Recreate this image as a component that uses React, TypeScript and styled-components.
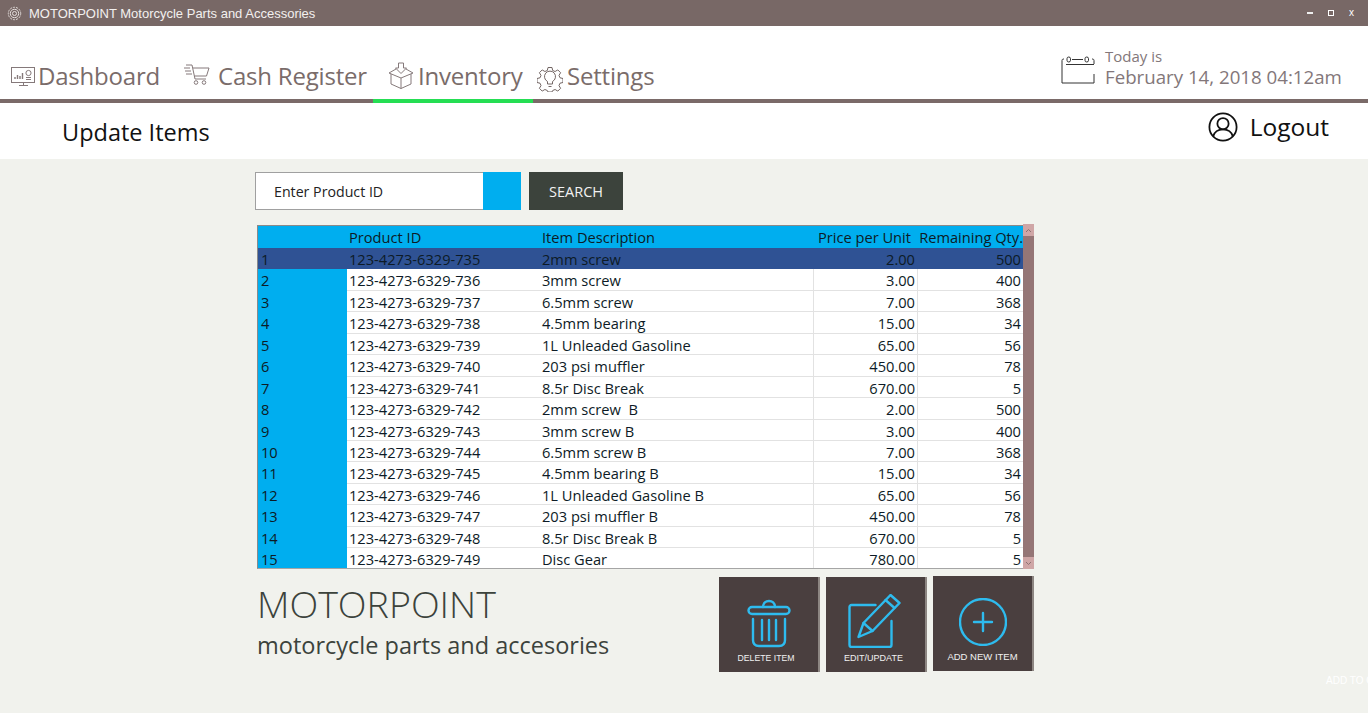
import React from 'react'
import styled, {createGlobalStyle} from 'styled-components'

const GlobalStyle = createGlobalStyle`
  html, body {
    margin: 0;
    padding: 0;
    background: #fff;
    overflow: hidden;
  }
  * {
    box-sizing: border-box;
  }
`

const Page = styled.div`
  position: relative;
  width: 1368px;
  height: 720px;
  overflow: hidden;
  font-family: "Open Sans", "Noto Sans", sans-serif;
  background: #fff;
`

const TitleBar = styled.header`
  display: flex;
  align-items: center;
  height: 26px;
  padding: 0 9px 0 7px;
  background: #786866;
  color: #f3f0ef;
`

const AppTitle = styled.span`
  margin-left: 7px;
  font-family: "Liberation Sans", sans-serif;
  font-size: 13px;
  flex: 1;
`

const WindowButtons = styled.div`
  display: flex;
  align-items: center;
  gap: 15px;
  padding-right: 5px;
`

const Minimize = styled.span`
  width: 6px;
  height: 2px;
  background: #eee;
`

const Maximize = styled.span`
  width: 6px;
  height: 6px;
  border: 1px solid #fff;
`

const CloseMark = styled.span`
  font-family: "Liberation Sans", sans-serif;
  font-size: 10px;
  line-height: 10px;
  color: #fff;
`

const NavBar = styled.nav`
  display: flex;
  align-items: flex-end;
  height: 77px;
  border-bottom: 4px solid #7a6a68;
`

const Tab = styled.div<{$width: number; $pad: number; $gap: number; $active?: boolean}>`
  display: flex;
  align-items: center;
  width: ${(p) => p.$width}px;
  height: 42px;
  margin-bottom: -4px;
  padding: 0 0 9px ${(p) => p.$pad}px;
  gap: ${(p) => p.$gap}px;
  border-bottom: 4px solid ${(p) => (p.$active ? '#25de53' : 'transparent')};
  color: #7a6c6a;
  font-size: 24px;
  letter-spacing: -0.2px;
  white-space: nowrap;
`

const DateBlock = styled.div`
  display: flex;
  align-items: center;
  margin-left: auto;
  gap: 10px;
  width: 307px;
  height: 60px;
  margin-bottom: 1px;
  color: #83777a;
`

const DateText = styled.div`
  display: flex;
  flex-direction: column;
`

const TodayLabel = styled.span`
  font-size: 15px;
  line-height: 16px;
`

const DateValue = styled.span`
  font-size: 18.7px;
  line-height: 25px;
  white-space: nowrap;
`

const SubHeader = styled.div`
  display: flex;
  align-items: center;
  justify-content: space-between;
  height: 56px;
  padding: 0 39px 2px 62px;
  color: #111;
`

const PageTitle = styled.h1`
  margin: 4px 0 0;
  font-size: 23.5px;
  font-weight: 400;
`

const Logout = styled.div`
  display: flex;
  align-items: center;
  gap: 12px;
  margin-top: -7px;
  font-size: 24.5px;
`

const Main = styled.main`
  height: 554px;
  padding: 13px 0 0 255px;
  background: #f1f2ed;
`

const SearchRow = styled.div`
  display: flex;
  height: 38px;
`

const SearchField = styled.div`
  display: flex;
  align-items: center;
  width: 228px;
  padding-left: 18px;
  background: #fff;
  border: 1px solid #a0a0a0;
  border-right: none;
  color: #222;
  font-size: 14.2px;
`

const SearchSwatch = styled.div`
  width: 38px;
  background: #00aeef;
`

const SearchButton = styled.button`
  width: 94px;
  margin-left: 8px;
  border: none;
  background: #3c433c;
  color: #f2f2f2;
  font-family: inherit;
  font-size: 14.5px;
`

const GridWrap = styled.div`
  display: flex;
  width: 777px;
  height: 345px;
  margin: 14px 0 0 2px;
  overflow: hidden;
`

const Grid = styled.div`
  flex: 1;
  margin-top: 1px;
  overflow: hidden;
  border-top: 1px solid #8a8a8a;
  border-bottom: 1px solid #a5a5a5;
  border-left: 1px solid #8a8a8a;
  font-size: 14.65px;
  color: #0d1b26;
`

const Row = styled.div<{$kind: 'head' | 'selected' | 'normal'}>`
  display: grid;
  grid-template-columns: 89px 192px 274px 104px 106px;
  height: ${(p) => (p.$kind === 'head' ? 22 : 21.45)}px;
  line-height: 23px;
  background: ${(p) => (p.$kind === 'head' ? '#00aeef' : p.$kind === 'selected' ? '#2f5294' : '#fff')};
  border-bottom: ${(p) => (p.$kind === 'normal' ? '1.5px solid #e2e2e2' : 'none')};
`

const RowNumber = styled.div`
  padding-left: 3px;
  background: #00aeef;
  margin-bottom: -2px;
  ${Row}[data-selected] & {
    background: transparent;
  }
`

const Cell = styled.div<{$right?: boolean; $inset?: number}>`
  padding: 0 ${(p) => p.$inset ?? 2}px 0 1px;
  text-align: ${(p) => (p.$right ? 'right' : 'left')};
  white-space: pre;
  overflow: hidden;
  border-left: 1px solid transparent;
  ${Row}[data-normal] &:nth-child(n + 4) {
    border-left-color: #e2e2e2;
  }
`

const TextCell = styled(Cell)`
  padding-left: 2px;
`

const ScrollTrack = styled.div`
  width: 11px;
  display: flex;
  flex-direction: column;
  background: #957676;
`

const ScrollCap = styled.div`
  height: 12px;
  background: #cfa6a6;
  display: flex;
  align-items: center;
  justify-content: center;
`

const ScrollThumb = styled.div`
  flex: 1;
`

const Footer = styled.div`
  display: flex;
  width: 779px;
  margin-top: 8px;
`

const Brand = styled.div`
  flex: 1;
  padding: 5px 0 0 2px;
  color: #3c433c;
`

const BrandName = styled.div`
  font-size: 37.6px;
  font-weight: 300;
  line-height: 44px;
`

const BrandTagline = styled.div`
  font-size: 23.5px;
  line-height: 38px;
`

const ActionButton = styled.div<{$raise?: boolean}>`
  display: flex;
  flex-direction: column;
  align-items: center;
  justify-content: flex-end;
  width: 101px;
  height: 95px;
  margin-left: 6px;
  margin-top: ${(p) => (p.$raise ? -1 : 0)}px;
  padding-bottom: 9px;
  background: #4a3f3f;
  border-right: 2px solid #8d8682;
  color: #f1f1f1;
  font-family: "Liberation Sans", sans-serif;
`

const ActionLabel = styled.span<{$size: number; $inset: number}>`
  margin-right: ${(p) => p.$inset}px;
  font-size: ${(p) => p.$size}px;
  white-space: nowrap;
`

const ActionIcon = styled.svg`
  display: block;
  margin-bottom: 5px;
  fill: none;
  stroke: #2ebbee;
  stroke-width: 2.4;
  stroke-linecap: round;
  stroke-linejoin: round;
`

const GhostLabel = styled.span`
  position: absolute;
  left: 1326px;
  top: 675px;
  color: #fff;
  font-family: "Liberation Sans", sans-serif;
  font-size: 10px;
  white-space: nowrap;
`

const Line = styled.svg<{$color?: string; $drop?: number}>`
  display: block;
  flex: none;
  fill: none;
  margin-top: ${(p) => p.$drop ?? 0}px;
  stroke: ${(p) => p.$color || '#7a6c6a'};
  stroke-width: 1;
`

const ITEMS: [string, string, string, string][] = [
  ['735', '2mm screw', '2.00', '500'],
  ['736', '3mm screw', '3.00', '400'],
  ['737', '6.5mm screw', '7.00', '368'],
  ['738', '4.5mm bearing', '15.00', '34'],
  ['739', '1L Unleaded Gasoline', '65.00', '56'],
  ['740', '203 psi muffler', '450.00', '78'],
  ['741', '8.5r Disc Break', '670.00', '5'],
  ['742', '2mm screw  B', '2.00', '500'],
  ['743', '3mm screw B', '3.00', '400'],
  ['744', '6.5mm screw B', '7.00', '368'],
  ['745', '4.5mm bearing B', '15.00', '34'],
  ['746', '1L Unleaded Gasoline B', '65.00', '56'],
  ['747', '203 psi muffler B', '450.00', '78'],
  ['748', '8.5r Disc Break B', '670.00', '5'],
  ['749', 'Disc Gear', '780.00', '5'],
]

const GearLogo = () => (
  <Line width="15" height="15" viewBox="0 0 15 15" $color="#e4dedc">
    <circle cx="7.5" cy="7.5" r="6.2" strokeDasharray="2 1" />
    <circle cx="7.5" cy="7.5" r="4.2" />
    <circle cx="7.5" cy="7.5" r="2" />
  </Line>
)

const DashboardIcon = () => (
  <Line width="25" height="22" viewBox="0 0 25 22" $color="#85797a">
    <rect x="0.5" y="2.5" width="23" height="15" />
    <path d="M8 20.5h9M12.5 17.5v3" />
    <path d="M4 14v-2M6.5 14v-4M9 14v-3M11.5 14V8" strokeWidth="1.4" />
    <circle cx="17.5" cy="8" r="2.6" />
    <path d="M15 12.5h5M15 14.5h5" />
  </Line>
)

const CartIcon = () => (
  <Line width="26" height="23" viewBox="0 0 26 23" $color="#85797a" $drop={-2}>
    <path d="M2 2h6l3 14h11" />
    <path d="M9 5h16l-2.5 8H10.5" />
    <path d="M0 5h6M1 8h6M2 11h6" />
    <circle cx="12" cy="19.5" r="1.8" />
    <circle cx="20" cy="19.5" r="1.8" />
  </Line>
)

const BoxIcon = () => (
  <Line width="26" height="27" viewBox="0 0 26 27" $color="#85797a">
    <path d="M10.500 1h5v5h3L13 11.500 7.500 6h3z" />
    <path d="M1 11l7-4M25 11l-7-4" />
    <path d="M1 11l12 5 12-5" />
    <path d="M3 12v10l10 4.500 10-4.500V12M13 16v10.500" />
  </Line>
)

const SettingsIcon = () => (
  <Line width="26" height="26" viewBox="0 0 26 26" $color="#736664" $drop={6}>
    <path d="M11 1.500h4l.7 3 2.400 1 2.700-1.600 2.800 2.800-1.600 2.700 1 2.400 3 .7v4l-3 .7-1 2.400 1.600 2.700-2.800 2.800-2.700-1.600-2.400 1-.7 1.500h-4l-.7-1.500-2.400-1-2.700 1.600-2.800-2.800 1.600-2.700-1-2.400-3-.7v-4l3-.7 1-2.400-1.600-2.700 2.800-2.800 2.700 1.600 2.400-1z" />
    <path d="M10.500 18v-2.500a5.500 5.500 0 1 1 5 0V18zM11.500 20.500h3" />
  </Line>
)

const CalendarIcon = () => (
  <Line width="34" height="30" viewBox="0 0 34 30" $color="#333" $drop={2}>
    <path d="M1 6.500V29h32V20M1 6.500C1 5.500 1.500 5 3 5M33 10V6.500C33 5.500 32.500 5 31 5M5 10.500h28" />
    <rect x="6" y="3" width="3.500" height="5" rx="1.700" />
    <rect x="24" y="3" width="3.500" height="5" rx="1.700" />
    <path d="M11 5.500h11" />
  </Line>
)

const UserIcon = () => (
  <Line width="30" height="30" viewBox="0 0 32 32" $color="#111">
    <circle cx="16" cy="16" r="14.500" strokeWidth="1.900" />
    <circle cx="16" cy="12.500" r="6" strokeWidth="1.900" />
    <path d="M5.500 26c1.500-5 5.500-7.500 10.500-7.500S25 21 26.500 26" strokeWidth="1.900" />
  </Line>
)

const TrashIcon = () => (
  <ActionIcon width="44" height="50" viewBox="0 0 44 50">
    <rect x="1.500" y="9" width="41" height="7" rx="3.500" />
    <path d="M16 9c0-8 12-8 12 0" />
    <path d="M6 21v21c0 4 2 6 6 6h20c4 0 6-2 6-6V21" />
    <path d="M15 22v20M22 22v20M29 22v20" />
  </ActionIcon>
)

const EditIcon = () => (
  <ActionIcon width="55" height="54" viewBox="0 0 54 54">
    <path d="M27 11H3c-1 0-2 1-2 2v38c0 1 1 2 2 2h38c1 0 2-1 2-2V27" />
    <path d="M42 1l9 8-27 28-14 6 5-14z" />
    <path d="M15 29l9 8M37 6l9 8" />
  </ActionIcon>
)

const PlusIcon = () => (
  <ActionIcon width="48" height="48" viewBox="0 0 48 48">
    <circle cx="24" cy="24" r="23" />
    <path d="M24 15v18M15 24h18" />
  </ActionIcon>
)

export default function App() {
  return (
    <Page>
      <GlobalStyle />
      <TitleBar>
        <GearLogo />
        <AppTitle>MOTORPOINT Motorcycle Parts and Accessories</AppTitle>
        <WindowButtons>
          <Minimize />
          <Maximize />
          <CloseMark>x</CloseMark>
        </WindowButtons>
      </TitleBar>

      <NavBar>
        <Tab $width={184} $pad={11} $gap={2}>
          <DashboardIcon />
          Dashboard
        </Tab>
        <Tab $width={189} $pad={0} $gap={8}>
          <CartIcon />
          Cash Register
        </Tab>
        <Tab $width={160} $pad={15} $gap={4} $active>
          <BoxIcon />
          Inventory
        </Tab>
        <Tab $width={140} $pad={4} $gap={4}>
          <SettingsIcon />
          Settings
        </Tab>
        <DateBlock>
          <CalendarIcon />
          <DateText>
            <TodayLabel>Today is</TodayLabel>
            <DateValue>February 14, 2018 04:12am</DateValue>
          </DateText>
        </DateBlock>
      </NavBar>

      <SubHeader>
        <PageTitle>Update Items</PageTitle>
        <Logout>
          <UserIcon />
          Logout
        </Logout>
      </SubHeader>

      <Main>
        <SearchRow>
          <SearchField>Enter Product ID</SearchField>
          <SearchSwatch />
          <SearchButton>SEARCH</SearchButton>
        </SearchRow>

        <GridWrap>
          <Grid>
            <Row $kind="head">
              <TextCell />
              <Cell>Product ID</Cell>
              <TextCell>Item Description</TextCell>
              <Cell $right $inset={6}>Price per Unit</Cell>
              <Cell $right $inset={0}>Remaining Qty.</Cell>
            </Row>
            {ITEMS.map(([suffix, name, price, qty], i) => (
              <Row
                key={suffix}
                $kind={i === 0 ? 'selected' : 'normal'}
                data-selected={i === 0 ? '' : undefined}
                data-normal={i === 0 ? undefined : ''}
              >
                <RowNumber>{i + 1}</RowNumber>
                <Cell>123-4273-6329-{suffix}</Cell>
                <TextCell>{name}</TextCell>
                <Cell $right>{price}</Cell>
                <Cell $right>{qty}</Cell>
              </Row>
            ))}
          </Grid>
          <ScrollTrack>
            <ScrollCap>
              <svg width="7" height="5" viewBox="0 0 7 5" fill="none" stroke="#8d7272">
                <path d="M1 4l2.500-2.500L6 4" />
              </svg>
            </ScrollCap>
            <ScrollThumb />
            <ScrollCap>
              <svg width="7" height="5" viewBox="0 0 7 5" fill="none" stroke="#8d7272">
                <path d="M1 1l2.500 2.500L6 1" />
              </svg>
            </ScrollCap>
          </ScrollTrack>
        </GridWrap>

        <Footer>
          <Brand>
            <BrandName>MOTORPOINT</BrandName>
            <BrandTagline>motorcycle parts and accesories</BrandTagline>
          </Brand>
          <ActionButton>
            <TrashIcon />
            <ActionLabel $size={8.7} $inset={5}>DELETE ITEM</ActionLabel>
          </ActionButton>
          <ActionButton>
            <EditIcon />
            <ActionLabel $size={9} $inset={4}>EDIT/UPDATE</ActionLabel>
          </ActionButton>
          <ActionButton $raise>
            <PlusIcon />
            <ActionLabel $size={9.5} $inset={0}>ADD NEW ITEM</ActionLabel>
          </ActionButton>
        </Footer>
      </Main>
      <GhostLabel>ADD TO CART</GhostLabel>
    </Page>
  )
}
